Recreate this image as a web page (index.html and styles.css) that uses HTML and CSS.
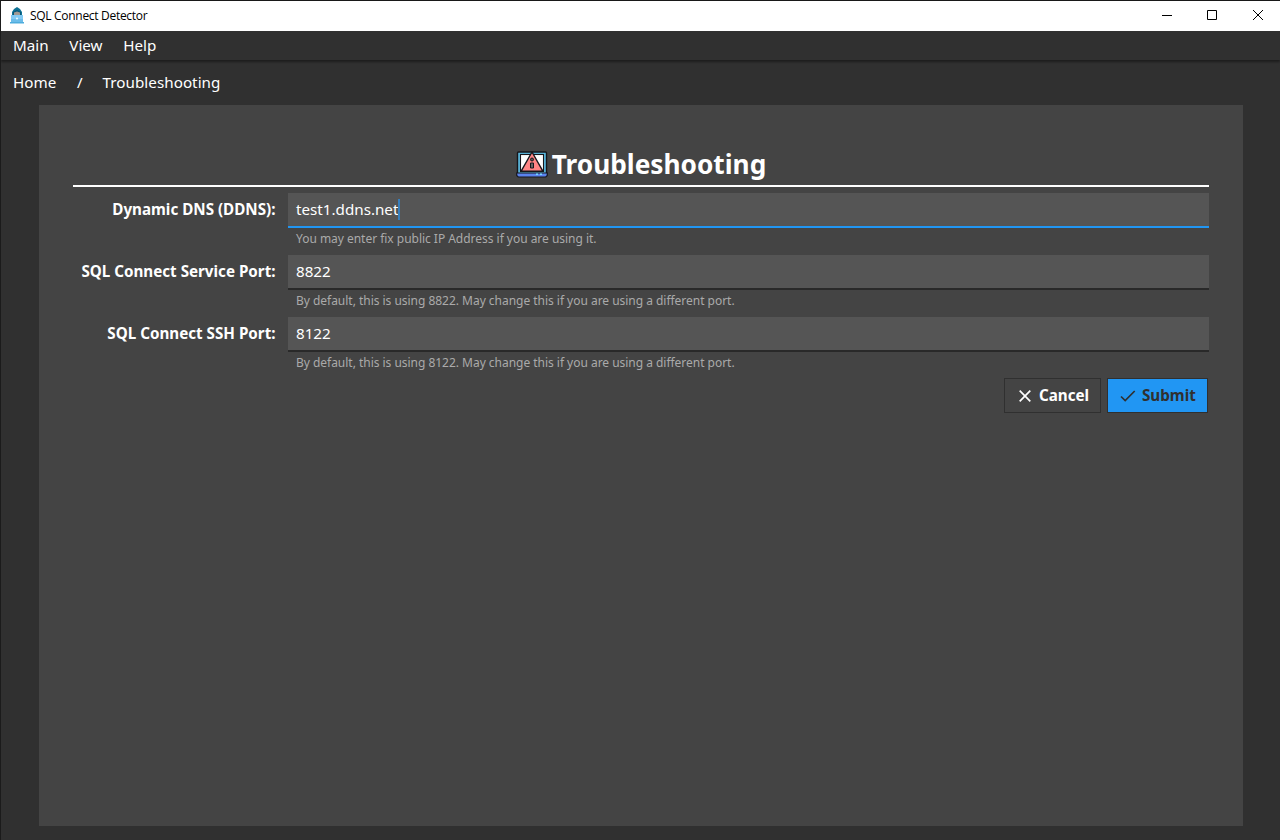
FILE: index.html
```html
<!DOCTYPE html>
<html lang="en">
<head>
<meta charset="utf-8">
<title>SQL Connect Detector</title>
<link rel="stylesheet" href="styles.css">
</head>
<body>
<div class="window">
  <header class="titlebar">
    <svg class="app-icon" width="14" height="18" viewBox="0 0 14 18">
      <path d="M2 10V5L4 2 7 0l3 2 2 3v5z" fill="#0d7194"/>
      <path d="M3 5 7 3l4 2v4H3z" fill="#075879"/>
      <path d="M4 5.500 7 4.500l3 1V8H4z" fill="#a19b94"/>
      <path d="M1 8h12v7H1z" fill="#83caf3"/>
      <path d="M1 12h12v3H1z" fill="#6bbce9"/>
      <path d="M0 15h14v1.500H0z" fill="#4eaddd"/>
      <circle cx="7" cy="11.500" r="1.100" fill="#e5f8ff"/>
    </svg>
    <span class="app-title">SQL Connect Detector</span>
    <div class="window-controls">
      <svg width="46" height="30" viewBox="0 0 46 30"><path d="M18 14.500h10"/></svg>
      <svg width="46" height="30" viewBox="0 0 46 30"><path d="M17.500 9.500h9v9h-9z"/></svg>
      <svg width="46" height="30" viewBox="0 0 46 30"><path d="M17 9l10 10M27 9 17 19"/></svg>
    </div>
  </header>
  <nav class="menubar"><span>Main</span><span>View</span><span>Help</span></nav>
  <nav class="breadcrumb"><span>Home</span><span class="slash">/</span><span>Troubleshooting</span></nav>
  <main class="panel">
    <h1 class="heading">
      <svg class="warning-icon" width="32" height="28" viewBox="0 0 32 28">
        <rect x="1.500" y="1" width="29" height="22" rx="1" fill="#5bb8dd" stroke="#17171c" stroke-width="1.400"/>
        <rect x="4.500" y="3.500" width="23" height="17" fill="#fff" stroke="#17171c" stroke-width="1.100"/>
        <path d="M16 1 27 20.300H5z" fill="#ff8585" stroke="#17171c" stroke-width="1.400" stroke-linejoin="round"/>
        <circle cx="16" cy="8.500" r="1.500" fill="#555" stroke="#17171c"/>
        <path d="M14.500 12h3v5h-3z" fill="#666" stroke="#17171c"/>
        <path d="M.7 22h30.600v2.500L29.800 26H2.200L.7 24.500z" fill="#5a83ee" stroke="#17171c" stroke-width="1.200"/>
        <path d="M20 22.500h2v1.500h-2zM24 22.500h2v1.500h-2z" fill="#73d8ff"/>
      </svg>
      <span>Troubleshooting</span>
    </h1>
    <form class="form">
      <label class="label">Dynamic DNS (DDNS):</label>
      <div class="field">
        <div class="input focused"><span>test1.ddns.net</span><i class="caret"></i></div>
        <p class="hint">You may enter fix public IP Address if you are using it.</p>
      </div>
      <label class="label">SQL Connect Service Port:</label>
      <div class="field">
        <div class="input">8822</div>
        <p class="hint">By default, this is using 8822. May change this if you are using a different port.</p>
      </div>
      <label class="label">SQL Connect SSH Port:</label>
      <div class="field">
        <div class="input">8122</div>
        <p class="hint">By default, this is using 8122. May change this if you are using a different port.</p>
      </div>
    </form>
    <div class="actions">
      <button class="button cancel" type="button"><svg width="12" height="12" viewBox="0 0 12 12"><path d="M.7.7l10.600 10.600M11.300.7.7 11.300"/></svg><span>Cancel</span></button>
      <button class="button submit" type="button"><svg width="16" height="12" viewBox="0 0 16 12"><path d="M1 6.500 5.200 10.600 14.700 1"/></svg><span>Submit</span></button>
    </div>
  </main>
</div>
</body>
</html>
```
FILE: styles.css
```css
* { box-sizing: border-box; }
body { margin: 0; background: #303030; font-family: "Noto Sans", sans-serif; }
.window {
  width: 1280px; height: 840px; overflow: hidden;
  border-top: 1px solid #181818; border-left: 1px solid #1b1b1b;
  background: #303030; color: #fff; font-size: 15.2px;
}
.titlebar { display: flex; align-items: center; height: 30px; padding-left: 9px; background: #fff; color: #000; }
.app-icon { margin-right: 6px; }
.app-title { font: 12px/28px "Open Sans", sans-serif; letter-spacing: -0.3px; }
.window-controls { display: flex; margin-left: auto; margin-right: -2px; }
.window-controls svg { fill: none; stroke: #000; stroke-width: 1; }
.menubar {
  display: flex; gap: 20.7px; height: 29px; padding-left: 12px; line-height: 29px;
  box-shadow: 0 2px 2px 0 rgba(0, 0, 0, .4);
}
.breadcrumb { display: flex; height: 45px; padding-left: 12px; line-height: 45px; letter-spacing: 0.04px; }
.slash { margin: 0 20px 0 20.5px; }
.panel { width: 1204px; height: 721px; margin-left: 38px; padding: 39px 34px 0; background: #444; }
.heading {
  display: flex; align-items: center; justify-content: center; gap: 4px;
  height: 43px; margin: 0; border-bottom: 2px solid #fff;
  font-size: 26.25px; line-height: 41px; font-weight: 700;
}
.form { display: grid; grid-template-columns: 202.500px 921px; column-gap: 12.500px; margin-top: 6px; }
.label { text-align: right; font-weight: 700; line-height: 33.5px; }
.field { height: 62px; }
.input {
  display: flex; align-items: center; height: 35px; padding: 0 8px;
  background: #555; border-bottom: 2px solid #292929; line-height: 33px;
}
.focused { border-bottom-color: #2196f3; }
.caret { width: 2px; height: 21px; background: #367fbd; }
.hint { margin: 0; padding-left: 8px; color: #aaa; font-size: 12px; line-height: 22px; letter-spacing: -0.025px; }
.actions { display: flex; justify-content: flex-end; gap: 6px; padding-right: 1px; margin-top: -1px; }
.button {
  display: flex; align-items: center; height: 35px; padding: 0 12px;
  border: 1px solid #303030; background: #444; color: #fff;
  font: 700 15.2px/33px "Noto Sans", sans-serif;
}
.button svg { fill: none; stroke: currentColor; stroke-width: 1.7; flex: none; }
.cancel { width: 97px; gap: 8px; padding: 0 0 0 14px; }
.submit { width: 101px; gap: 6px; padding-right: 0; background: #2196f3; color: #303030; }
```
